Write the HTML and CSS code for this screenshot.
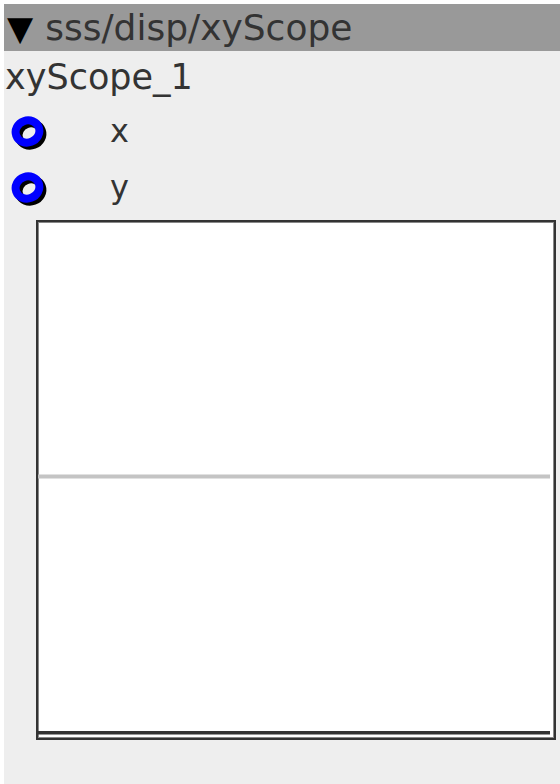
FILE: index.html
```html
<!DOCTYPE html>
<html>
<head>
<meta charset="utf-8">
<link rel="stylesheet" href="styles.css">
</head>
<body>
<div class="panel">
  <div class="header"><span class="tri">▼</span><span class="path">sss/disp/xyScope</span></div>
  <div class="title">xyScope_1</div>
  <div class="row">
    <svg class="radio" width="40" height="36" viewBox="0 0 40 36">
      <ellipse cx="19.5" cy="19.5" rx="12" ry="11" fill="none" stroke="#000" stroke-width="8" transform="rotate(-20 19.5 19.5)"/>
      <ellipse cx="16.5" cy="16.5" rx="12" ry="11" fill="none" stroke="#0000ff" stroke-width="8" transform="rotate(-20 16.5 16.5)"/>
    </svg>
    <span class="label">x</span>
  </div>
  <div class="row">
    <svg class="radio" width="40" height="36" viewBox="0 0 40 36">
      <ellipse cx="19.5" cy="19.5" rx="12" ry="11" fill="none" stroke="#000" stroke-width="8" transform="rotate(-20 19.5 19.5)"/>
      <ellipse cx="16.5" cy="16.5" rx="12" ry="11" fill="none" stroke="#0000ff" stroke-width="8" transform="rotate(-20 16.5 16.5)"/>
    </svg>
    <span class="label">y</span>
  </div>
  <div class="scope">
    <svg class="plot" width="516" height="516" viewBox="0 0 516 516">
      <rect x="0" y="252.5" width="512" height="4" fill="#c4c4c4"/>
      <rect x="0" y="509" width="512" height="3.5" fill="#333"/>
    </svg>
  </div>
</div>
</body>
</html>
```
FILE: styles.css
```css
html, body {
  margin: 0;
  padding: 0;
  background: #fff;
}
body {
  font-family: "DejaVu Sans", sans-serif;
  color: #333;
}
.panel {
  margin: 4px 0 0 4px;
  width: 556px;
  height: 780px;
  background: #eeeeee;
  overflow: hidden;
}
.header {
  height: 47px;
  background: #999999;
  display: flex;
  align-items: center;
  font-size: 36px;
  color: #333;
  padding-left: 3px;
}
.tri {
  color: #000;
  font-size: 34px;
  margin-right: 12px;
}
.title {
  height: 54px;
  line-height: 52px;
  font-size: 35px;
  padding-left: 1px;
}
.row {
  height: 56px;
  display: flex;
  align-items: center;
}
.radio {
  margin-left: 7px;
  display: block;
}
.label {
  font-size: 32px;
  margin-left: 59px;
  margin-top: -4px;
}
.scope {
  margin: 3px 0 0 32px;
  width: 516px;
  height: 516px;
  border: 2px solid #333;
  box-shadow: inset 0 0 0 1px #888;
  background: #fff;
}
.plot {
  display: block;
}
```
